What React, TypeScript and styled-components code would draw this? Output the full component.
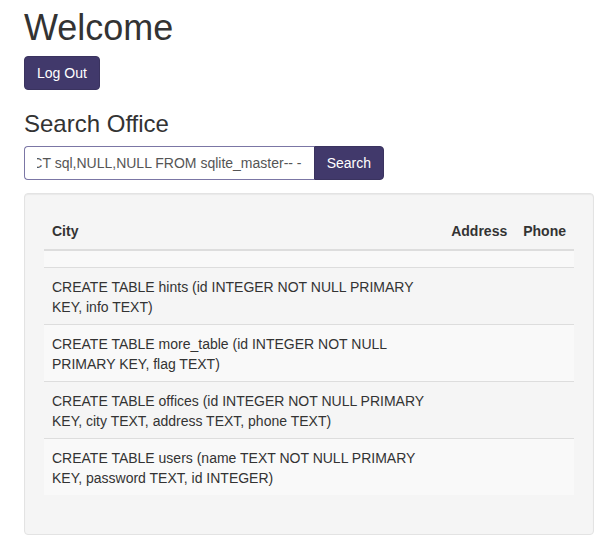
import React, { useLayoutEffect, useRef } from "react";
import styled, { createGlobalStyle } from "styled-components";

const Global = createGlobalStyle`
  html, body { margin: 0; padding: 0; background: #fff; }
  body {
    font-family: "Liberation Sans", Arial, Helvetica, sans-serif;
    font-size: 14px;
    line-height: 1.42857143;
    color: #333;
  }
  * { box-sizing: border-box; }
`;

const Page = styled.div`
  padding: 0 14px 0 24px;
`;

const Title = styled.h1`
  font-size: 36px;
  font-weight: 500;
  line-height: 1.1;
  margin: 8px 0 8px;
`;

const SubTitle = styled.h3`
  font-size: 24px;
  font-weight: 500;
  line-height: 1.1;
  margin: 21px 0 9px;
`;

const Button = styled.button<{ $group?: boolean }>`
  display: inline-block;
  height: 34px;
  padding: 6px 12px;
  font-family: inherit;
  font-size: 14px;
  line-height: 20px;
  color: #fff;
  background: #41396b;
  border: 1px solid #3a335f;
  border-radius: ${(p) => (p.$group ? "0 4px 4px 0" : "4px")};
  cursor: pointer;
`;

const SearchRow = styled.form`
  display: flex;
  width: 360px;
  margin: 0 0 13px;
`;

const SearchInput = styled.input`
  width: 290px;
  height: 34px;
  padding: 6px 12px;
  font-family: inherit;
  font-size: 14px;
  line-height: 20px;
  color: #555;
  background: #fff;
  border: 1px solid #7b76a5;
  border-right: 0;
  border-radius: 4px 0 0 4px;
  outline: none;
`;

const Well = styled.div`
  padding: 19px;
  background: #f5f5f5;
  border: 1px solid #e3e3e3;
  border-radius: 4px;
  box-shadow: inset 0 1px 1px rgba(0, 0, 0, 0.05);
  margin-bottom: 20px;
`;

const Table = styled.table`
  width: 100%;
  border-collapse: collapse;
  border-spacing: 0;
  margin-bottom: 20px;
`;

const Th = styled.th`
  text-align: left;
  vertical-align: bottom;
  padding: 8px;
  line-height: 20px;
  font-weight: bold;
  border-bottom: 2px solid #ddd;
`;

const Row = styled.tr`
  &:nth-of-type(odd) { background: #f9f9f9; }
`;

const Td = styled.td`
  padding: 9px 8px 7px;
  line-height: 20px;
  vertical-align: top;
  border-top: 1px solid #ddd;
`;

const rows = [
  "",
  "CREATE TABLE hints (id INTEGER NOT NULL PRIMARY KEY, info TEXT)",
  "CREATE TABLE more_table (id INTEGER NOT NULL PRIMARY KEY, flag TEXT)",
  "CREATE TABLE offices (id INTEGER NOT NULL PRIMARY KEY, city TEXT, address TEXT, phone TEXT)",
  "CREATE TABLE users (name TEXT NOT NULL PRIMARY KEY, password TEXT, id INTEGER)",
];

export default function App() {
  const inputRef = useRef<HTMLInputElement>(null);
  useLayoutEffect(() => {
    const el = inputRef.current;
    if (el) el.scrollLeft = el.scrollWidth;
  }, []);
  return (
    <Page>
      <Global />
      <Title>Welcome</Title>
      <Button type="button">Log Out</Button>
      <SubTitle>Search Office</SubTitle>
      <SearchRow onSubmit={(e) => e.preventDefault()}>
        <SearchInput
          ref={inputRef}
          defaultValue="' UNION SELECT sql,NULL,NULL FROM sqlite_master-- -"
        />
        <Button type="submit" $group>
          Search
        </Button>
      </SearchRow>
      <Well>
        <Table>
          <thead>
            <tr>
              <Th>City</Th>
              <Th>Address</Th>
              <Th>Phone</Th>
            </tr>
          </thead>
          <tbody>
            {rows.map((r, i) => (
              <Row key={i}>
                <Td>{r}</Td>
                <Td></Td>
                <Td></Td>
              </Row>
            ))}
          </tbody>
        </Table>
      </Well>
    </Page>
  );
}
